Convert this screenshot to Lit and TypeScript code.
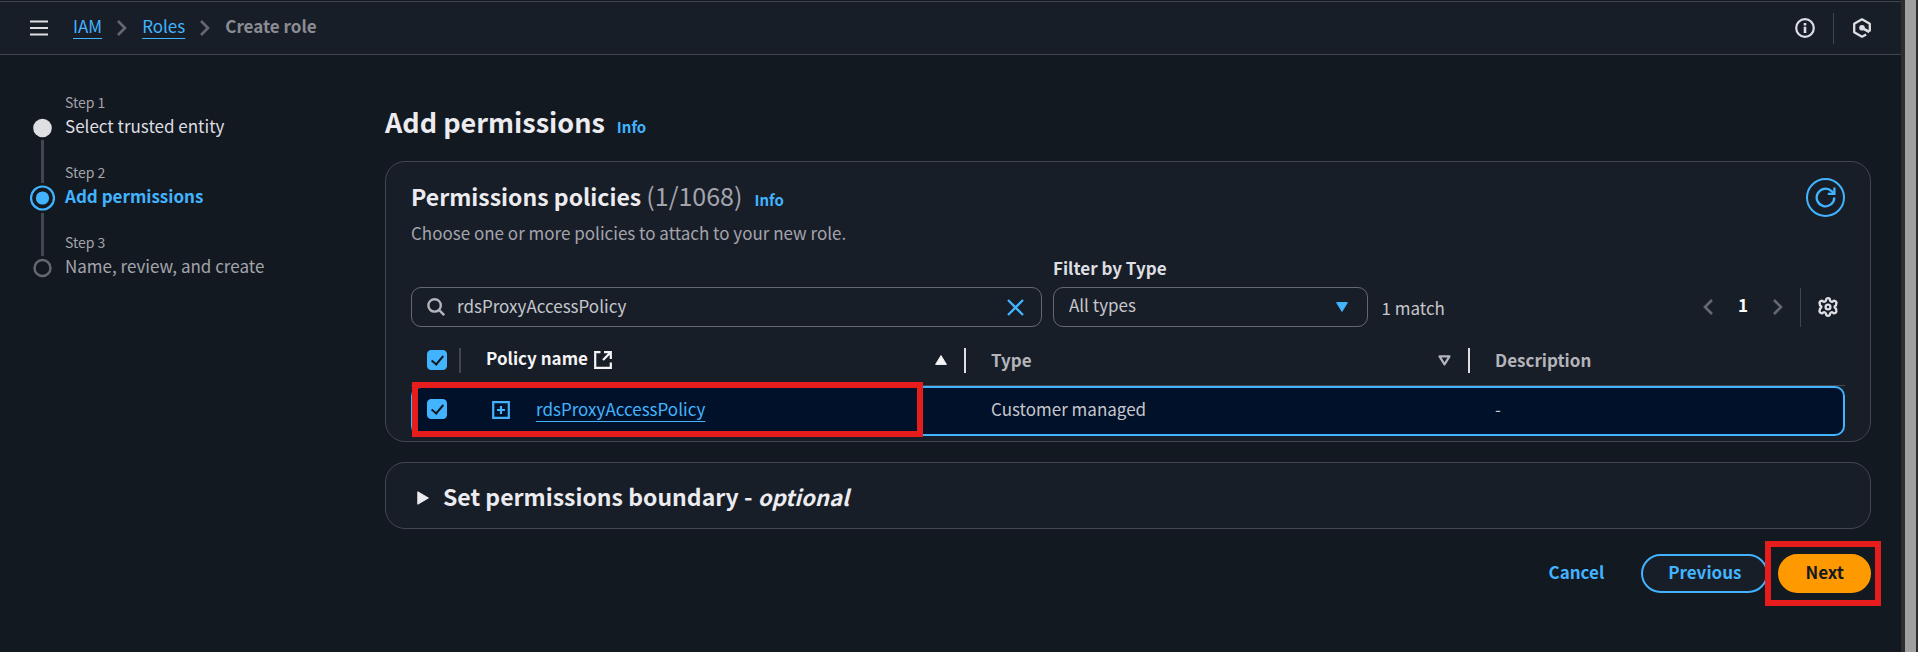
import { LitElement, html, css, svg, nothing } from "lit";
import { customElement, property, state } from "lit/decorators.js";
import { classMap } from "lit/directives/class-map.js";

type StepState = "done" | "active" | "todo";

const chevronRight = html`<svg class="chevron" width="12" height="18" viewBox="0 0 12 18" fill="none" stroke="currentColor" stroke-width="2.6" aria-hidden="true"><path d="M2 2l7 7-7 7" /></svg>`;
const chevronLeft = html`<svg class="chevron" width="12" height="18" viewBox="0 0 12 18" fill="none" stroke="currentColor" stroke-width="2.6" aria-hidden="true"><path d="M10 2L3 9l7 7" /></svg>`;

@customElement("wizard-step")
class WizardStep extends LitElement {
  static styles = css`
    :host {
      display: grid;
      grid-template-columns: 25px 1fr;
      column-gap: 10px;
      height: 70px;
    }
    .label {
      color: #a4a4ad;
      font-size: 14px;
      line-height: 22px;
    }
    .title {
      color: #a4a4ad;
      font-size: 17px;
      line-height: 25px;
      text-decoration: none;
    }
    .done { color: #dedee3; }
    .active { color: #42b4ff; font-weight: 700; }
  `;
  @property({ type: Number }) number = 1;
  @property() heading = "";
  @property() status: StepState = "todo";
  @property({ type: Boolean }) last = false;

  private marker() {
    if (this.status === "done") return svg`<circle cx="12.5" cy="37" r="9.3" fill="#dedee3"/>`;
    if (this.status === "active")
      return svg`<circle cx="12.5" cy="37" r="11.5" fill="none" stroke="#42b4ff" stroke-width="2.2"/><circle cx="12.5" cy="37" r="6.6" fill="#42b4ff"/>`;
    return svg`<circle cx="12.5" cy="37" r="8" fill="none" stroke="#656871" stroke-width="2.4"/>`;
  }

  render() {
    const clear = this.status === "active" ? 15 : 12;
    return html`
      <svg width="25" height="70" viewBox="0 0 25 70" aria-hidden="true">
        ${this.number > 1 ? svg`<path d=${`M12.5 0V${37 - clear}`} stroke="#424650" stroke-width="3"/>` : nothing}
        ${this.last ? nothing : svg`<path d=${`M12.5 ${37 + clear}V70`} stroke="#424650" stroke-width="3"/>`}
        ${this.marker()}
      </svg>
      <div>
        <div class="label">Step ${this.number}</div>
        ${this.status === "done"
          ? html`<a class="title done" href="#step-1">${this.heading}</a>`
          : html`<div class=${classMap({ title: true, active: this.status === "active" })}>${this.heading}</div>`}
      </div>
    `;
  }
}

@customElement("app-root")
class AppRoot extends LitElement {
  static styles = css`
    :host {
      display: flex;
      min-height: 100vh;
      background: #131920;
      color: #c6c6cd;
      font: 400 17px/22px "Noto Sans CJK SC", "Noto Sans", sans-serif;
    }
    * { box-sizing: border-box; }
    svg { display: block; flex: none; }
    a { color: #42b4ff; }
    h1, h2, p { margin: 0; }
    button {
      font: inherit;
      color: inherit;
      background: none;
      border: 0;
      padding: 0;
      cursor: pointer;
    }
    .page { flex: 1; min-width: 0; }
    .scrollbar {
      flex: none;
      width: 17px;
      background: #9f9f9f;
      border-left: 4px solid #2d2d2d;
      border-right: 2px solid #2d2d2d;
    }

    .topbar {
      display: flex;
      align-items: center;
      height: 54px;
      margin-top: 1px;
      padding: 0 29px 0 30px;
      background: #181e27;
      border: 1px solid #424650;
      border-width: 1px 0;
      color: #dedee3;
    }
    .crumbs {
      display: flex;
      align-items: center;
      gap: 14px;
      flex: 1;
      margin: 0 0 0 25px;
      padding: 0;
      list-style: none;
    }
    .crumbs li { display: flex; align-items: center; gap: 14px; }
    .crumbs .text { line-height: 20px; padding-bottom: 4px; }
    .crumbs a, .policy-link {
      text-decoration-thickness: 1px;
      text-underline-offset: 5px;
    }
    .chevron { color: #656871; }
    .current { color: #8c8c94; font-weight: 700; }
    .tools { display: flex; align-items: center; gap: 18px; }
    .tools .rule { width: 1px; height: 31px; background: #424650; }

    .layout { display: grid; grid-template-columns: 385px 1fr; }
    .steps { padding: 36px 0 0 30px; }
    .main { min-width: 0; padding: 50px 30px 40px 0; }
    .title-row { display: flex; align-items: baseline; gap: 12px; }
    h1 { color: #ebebf0; font-size: 27px; line-height: 34px; }
    h2 { color: #ebebf0; font-size: 23px; line-height: 28px; }
    em { font-size: 22px; }
    .info { font-size: 15px; line-height: 20px; font-weight: 700; text-decoration: none; }
    .card {
      background: #181e27;
      border: 1px solid #424650;
      border-radius: 20px;
    }
    .policies { margin-top: 22px; padding: 16px 25px 5px; }
    .card-head { display: flex; justify-content: space-between; }
    .card-head .titles { padding-top: 3px; }
    .count { color: #a4a4ad; font-size: 25px; font-weight: 400; }
    .hint { margin-top: 12px; color: #a4a4ad; }
    .refresh {
      display: grid;
      place-items: center;
      width: 39px;
      height: 39px;
      border: 2px solid #42b4ff;
      border-radius: 50%;
      color: #42b4ff;
    }

    .toolbar { display: flex; align-items: flex-end; gap: 11px; margin-top: 13px; }
    .search, .select-box {
      display: flex;
      align-items: center;
      height: 40px;
      border: 1px solid #656871;
      border-radius: 10px;
    }
    .search { flex: 0 1 44%; padding: 0 17px 0 15px; gap: 12px; color: #b4b4bb; }
    .search input, select {
      flex: 1;
      min-width: 0;
      height: 38px;
      padding: 0 0 4px;
      border: 0;
      outline: 0;
      background: none;
      font: inherit;
      color: #c6c6cd;
      appearance: none;
    }
    .clear { color: #42b4ff; }
    .filter { flex: 0 1 22%; }
    .filter label { display: block; margin-bottom: 8px; font-weight: 700; color: #dedee3; }
    .select-box { display: grid; grid-template-columns: 1fr 12px; padding-right: 19px; }
    .select-box select { grid-area: 1 / 1 / 2 / 3; padding-left: 15px; }
    .select-box svg { grid-area: 1 / 2; pointer-events: none; }
    .matches { height: 40px; line-height: 42px; padding-left: 2px; }
    .pager { display: flex; align-items: center; margin-left: auto; height: 40px; color: #fff; }
    .pager .num { padding: 0 24px 4px; font-weight: 700; }
    .settings {
      display: flex;
      align-items: center;
      height: 39px;
      margin-left: 16px;
      padding: 0 7px 0 17px;
      border-left: 1px solid #424650;
      color: #dedee3;
    }

    .table-wrap { position: relative; }
    table {
      width: 100%;
      table-layout: fixed;
      border-collapse: separate;
      border-spacing: 0;
    }
    .c-check { width: 50px; }
    .c-name { width: 505px; }
    .c-type { width: 504px; }
    th {
      height: 59px;
      padding: 8px 0 0;
      text-align: left;
      border-bottom: 1px solid #424650;
      color: #b4b4bb;
    }
    .head {
      display: flex;
      align-items: center;
      height: 25px;
      padding: 0 17px 0 25px;
      border-right: 2px solid #dedee3;
    }
    .head svg.sort { margin-left: auto; }
    .head.plain { border-right: 0; }
    .head.check { padding: 0 0 0 16px; border-color: #424650; }
    .head.sorted { color: #f4f4f6; gap: 6px; }
    .head.sorted span { padding-bottom: 4px; }
    td {
      height: 50px;
      padding: 0 0 4px 25px;
      background: #001129;
      border: solid #42b4ff;
      border-width: 2px 0;
    }
    td:first-child { padding-left: 14px; border-left-width: 2px; border-radius: 10px 0 0 10px; }
    td:last-child { border-right-width: 2px; border-radius: 0 10px 10px 0; }
    .tick {
      display: grid;
      flex: none;
      place-items: center;
      appearance: none;
      width: 20px;
      height: 20px;
      margin: 0;
      border: 1px solid #42b4ff;
      border-radius: 4px;
    }
    .tick:checked { background: #42b4ff; }
    .tick:checked::before {
      content: "";
      box-sizing: border-box;
      width: 7px;
      height: 12px;
      margin-bottom: 2px;
      border: solid #131920;
      border-width: 0 2px 2px 0;
      transform: rotate(40deg);
    }
    .policy { display: flex; align-items: center; gap: 26px; padding-left: 6px; }
    .policy button { color: #42b4ff; padding-top: 2px; }
    .mark { position: absolute; border: 6px solid #e71d1d; pointer-events: none; }
    .mark-row { left: 1px; bottom: -1px; width: 511px; height: 55px; }
    .mark-next { inset: -13px -10px -13px -13px; }

    .boundary { margin-top: 20px; }
    .boundary button {
      display: flex;
      align-items: center;
      gap: 14px;
      width: 100%;
      height: 65px;
      padding-left: 31px;
      text-align: left;
    }
    .boundary svg { margin-top: 5px; }
    .actions { display: flex; justify-content: flex-end; gap: 10px; margin-top: 25px; }
    .btn {
      height: 39px;
      padding: 0 25px 4px;
      border: 2px solid transparent;
      border-radius: 20px;
      color: #42b4ff;
      font-weight: 700;
    }
    .outlined { border-color: #42b4ff; background: #181e27; }
    .primary { background: #ff9900; border-color: #ff9900; color: #131920; }
    .next { position: relative; }
  `;

  @state() private query = "rdsProxyAccessPolicy";

  render() {
    return html`
      <div class="page">
        <header class="topbar">
          <button aria-label="Open navigation">
            <svg width="18" height="16" viewBox="0 0 18 16" stroke="currentColor" stroke-width="2.2"><path d="M0 1.5h18M0 8h18M0 14.5h18" /></svg>
          </button>
          <ol class="crumbs">
            <li><a class="text" href="#iam">IAM</a>${chevronRight}</li>
            <li><a class="text" href="#roles">Roles</a>${chevronRight}</li>
            <li><span class="text current">Create role</span></li>
          </ol>
          <div class="tools">
            <button aria-label="Information">
              <svg width="20" height="20" viewBox="0 0 20 20" fill="none" stroke="currentColor" stroke-width="2.2"><circle cx="10" cy="10" r="8.8" /><path d="M10 8.7V15M10 5v2.4" stroke-width="2.6" /></svg>
            </button>
            <span class="rule"></span>
            <button aria-label="Assistant">
              <svg width="20" height="20" viewBox="0 0 20 20" fill="none" stroke="currentColor" stroke-width="2.3" stroke-linejoin="round"><path d="M17.8 13.6V5.7L10 1.3 2.2 5.7v8.6L10 18.7l4.2-2.3" /><path d="M10 9.8l7.4 4.2" stroke-width="2.6" /><circle cx="10" cy="9.8" r="2.8" fill="currentColor" stroke="none" /></svg>
            </button>
          </div>
        </header>

        <div class="layout">
          <nav class="steps" aria-label="Steps">
            <wizard-step number="1" heading="Select trusted entity" status="done"></wizard-step>
            <wizard-step number="2" heading="Add permissions" status="active"></wizard-step>
            <wizard-step number="3" heading="Name, review, and create" status="todo" last></wizard-step>
          </nav>

          <main class="main">
            <div class="title-row"><h1>Add permissions</h1><a class="info" href="#info">Info</a></div>

            <section class="card policies">
              <div class="card-head">
                <div class="titles">
                  <div class="title-row">
                    <h2>Permissions policies <span class="count">(1/1068)</span></h2>
                    <a class="info" href="#policies-info">Info</a>
                  </div>
                  <p class="hint">Choose one or more policies to attach to your new role.</p>
                </div>
                <button class="refresh" aria-label="Refresh">
                  <svg width="21" height="21" viewBox="0 0 21 21" fill="none" stroke="currentColor" stroke-width="2.3"><path d="M19.3 10.5a8.8 8.8 0 1 1-2.8-6.4L18.6 6" /><path d="M19.4 .5v6.3h-6.6" /></svg>
                </button>
              </div>

              <div class="toolbar">
                <div class="search">
                  <svg width="18" height="18" viewBox="0 0 18 18" fill="none" stroke="currentColor" stroke-width="2.4" aria-hidden="true"><circle cx="7.6" cy="7.4" r="6.2" /><path d="M12 11.8l5.2 5.4" /></svg>
                  <input aria-label="Search policies" .value=${this.query} @input=${(e: Event) => (this.query = (e.target as HTMLInputElement).value)} />
                  <button class="clear" aria-label="Clear search" @click=${() => (this.query = "")}>
                    <svg width="17" height="17" viewBox="0 0 17 17" stroke="currentColor" stroke-width="2.3"><path d="M1 1l15 15M16 1L1 16" /></svg>
                  </button>
                </div>
                <div class="filter">
                  <label for="type">Filter by Type</label>
                  <div class="select-box">
                    <select id="type"><option>All types</option></select>
                    <svg width="12" height="10" viewBox="0 0 12 10" fill="#42b4ff" stroke="#42b4ff" stroke-linejoin="round" aria-hidden="true"><path d="M.6.6h10.8L6 9.4z" /></svg>
                  </div>
                </div>
                <div class="matches">1 match</div>
                <div class="pager">
                  <button aria-label="Previous page">${chevronLeft}</button>
                  <span class="num">1</span>
                  <button aria-label="Next page">${chevronRight}</button>
                  <span class="settings">
                    <button aria-label="Preferences">
                      <svg width="20" height="20" viewBox="0 0 20 20" fill="none" stroke="currentColor" stroke-width="2.3" stroke-linejoin="round"><path d="M8 3.2a2 2 0 0 1 4 0 2 2 0 0 0 2.6 1.5 2 2 0 0 1 3.4 2.4q.6 1.3-.9 1.9a1.2 1.2 0 0 0 0 2q1.5.6.9 1.9a2 2 0 0 1-3.4 2.4A2 2 0 0 0 12 16.800a2 2 0 0 1-4 0 2 2 0 0 0-2.600-1.500 2 2 0 0 1-3.400-2.400q-.6-1.300.9-1.900a1.200 1.200 0 0 0 0-2q-1.500-.6-.9-1.900a2 2 0 0 1 3.400-2.400A2 2 0 0 0 8 3.200z" /><circle cx="10" cy="10" r="2.4" /></svg>
                    </button>
                  </span>
                </div>
              </div>

              <div class="table-wrap">
                <table>
                  <colgroup><col class="c-check" /><col class="c-name" /><col class="c-type" /><col /></colgroup>
                  <thead>
                    <tr>
                      <th><div class="head check"><input class="tick" type="checkbox" checked aria-label="Select all policies" /></div></th>
                      <th>
                        <div class="head sorted">
                          <span>Policy name</span>
                          <svg width="18" height="18" viewBox="0 0 18 18" fill="none" stroke="currentColor" stroke-width="2.2" aria-hidden="true"><path d="M6.5 1.2H1.2v15.6h15.6V11.5M10 1.2h6.8V8M16.6 1.4L9 9" /></svg>
                          <svg class="sort" width="12" height="10" viewBox="0 0 12 10" fill="currentColor" stroke="currentColor" stroke-linejoin="round" aria-hidden="true"><path d="M6 .6L11.4 9.4H.6z" /></svg>
                        </div>
                      </th>
                      <th>
                        <div class="head">
                          <span>Type</span>
                          <svg class="sort" width="13" height="11" viewBox="0 0 13 11" fill="none" stroke="currentColor" stroke-width="2.2" stroke-linejoin="round" aria-hidden="true"><path d="M1.5 1.4h10L6.5 9.4z" /></svg>
                        </div>
                      </th>
                      <th><div class="head plain"><span>Description</span></div></th>
                    </tr>
                  </thead>
                  <tbody>
                    <tr>
                      <td><input class="tick" type="checkbox" checked aria-label="Select rdsProxyAccessPolicy" /></td>
                      <td>
                        <div class="policy">
                          <button aria-label="Expand rdsProxyAccessPolicy">
                            <svg width="18" height="18" viewBox="0 0 18 18" fill="none" stroke="currentColor" stroke-width="2.2"><path d="M1.2 1.2h15.6v15.6H1.2zM5 9h8M9 5v8" /></svg>
                          </button>
                          <a class="policy-link" href="#policy">rdsProxyAccessPolicy</a>
                        </div>
                      </td>
                      <td>Customer managed</td>
                      <td>-</td>
                    </tr>
                  </tbody>
                </table>
                <div class="mark mark-row"></div>
              </div>
            </section>

            <section class="card boundary">
              <button aria-expanded="false">
                <svg width="12" height="14" viewBox="0 0 12 14" fill="#ebebf0" stroke="#ebebf0" stroke-linejoin="round" aria-hidden="true"><path d="M.8.8L11.4 7 .8 13.2z" /></svg>
                <h2>Set permissions boundary - <em>optional</em></h2>
              </button>
            </section>

            <div class="actions">
              <button class="btn">Cancel</button>
              <button class="btn outlined">Previous</button>
              <div class="next">
                <button class="btn primary">Next</button>
                <div class="mark mark-next"></div>
              </div>
            </div>
          </main>
        </div>
      </div>
      <div class="scrollbar" aria-hidden="true"></div>
    `;
  }
}
